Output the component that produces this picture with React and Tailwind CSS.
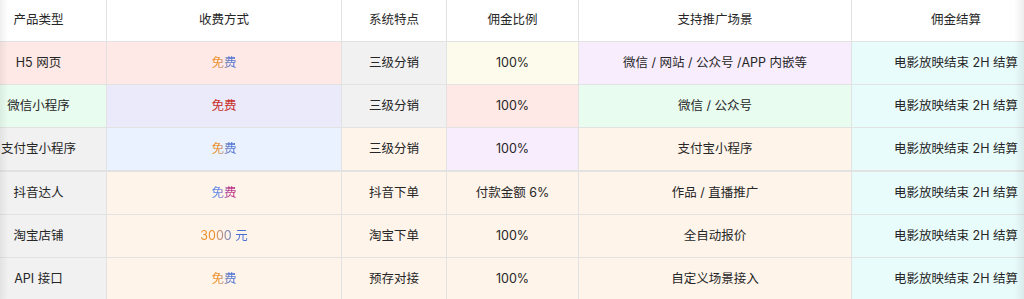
import { useLayoutEffect, useRef } from "react";

const bg = {
  pink: "bg-[#fee9e6]",
  green: "bg-[#e8fcef]",
  lavblue: "bg-[#eaeafb]",
  gray: "bg-[#f1f1f1]",
  cream: "bg-[#fdfbeb]",
  lav: "bg-[#f8edfd]",
  blue: "bg-[#e9f2fe]",
  peach: "bg-[#fef4ea]",
  cyan: "bg-[#e9fcfc]",
};

const warm = "bg-linear-to-r from-[#ec8d25] from-30% to-[#4a6fd2] to-70% bg-clip-text text-transparent";
const red = "text-[#c8302a]";
const violet = "bg-linear-to-r from-[#5a84e4] from-30% to-[#b82a82] to-70% bg-clip-text text-transparent";

const headers = ["产品类型", "收费方式", "系统特点", "佣金比例", "支持推广场景", "佣金结算"];

const rows = [
  {
    cells: [
      ["H5 网页", "pink"],
      ["免费", "pink", warm],
      ["三级分销", "gray"],
      ["100%", "cream"],
      ["微信 / 网站 / 公众号 /APP 内嵌等", "lav"],
      ["电影放映结束 2H 结算", "cyan"],
    ],
  },
  {
    cells: [
      ["微信小程序", "green"],
      ["免费", "lavblue", red],
      ["三级分销", "gray"],
      ["100%", "pink"],
      ["微信 / 公众号", "green"],
      ["电影放映结束 2H 结算", "cyan"],
    ],
  },
  {
    thick: true,
    cells: [
      ["支付宝小程序", "gray"],
      ["免费", "blue", warm],
      ["三级分销", "peach"],
      ["100%", "lav"],
      ["支付宝小程序", "peach"],
      ["电影放映结束 2H 结算", "cyan"],
    ],
  },
  {
    cells: [
      ["抖音达人", "gray"],
      ["免费", "peach", violet],
      ["抖音下单", "peach"],
      ["付款金额 6%", "peach"],
      ["作品 / 直播推广", "peach"],
      ["电影放映结束 2H 结算", "cyan"],
    ],
  },
  {
    cells: [
      ["淘宝店铺", "gray"],
      ["3000 元", "peach", warm],
      ["淘宝下单", "peach"],
      ["100%", "peach"],
      ["全自动报价", "peach"],
      ["电影放映结束 2H 结算", "cyan"],
    ],
  },
  {
    cells: [
      ["API 接口", "gray"],
      ["免费", "peach", warm],
      ["预存对接", "peach"],
      ["100%", "peach"],
      ["自定义场景接入", "peach"],
      ["电影放映结束 2H 结算", "cyan"],
    ],
  },
];

const cols = "grid grid-cols-[136px_235px_105px_132px_273px_208px]";

export default function App() {
  const scroller = useRef(null);

  useLayoutEffect(() => {
    if (scroller.current) scroller.current.scrollLeft = 29;
  }, []);

  return (
    <div
      className="relative w-[1024px] h-[299px] overflow-hidden bg-white text-[12.5px] text-[#262626]"
      style={{ fontFamily: 'Inter, "Noto Sans CJK SC", sans-serif' }}
    >
      <div ref={scroller} className="h-full overflow-x-auto overflow-y-hidden [scrollbar-width:none]">
        <div className="w-[1089px]">
          <div className={`${cols} h-[42px] border-b border-[#e2e2e2] bg-white`}>
            {headers.map((h, i) => (
              <div
                key={h}
                className={`flex items-center justify-center ${i < 5 ? "border-r border-[#e2e2e2]" : ""}`}
              >
                {h}
              </div>
            ))}
          </div>
          {rows.map((row, r) => (
            <div
              key={r}
              className={`${cols} ${row.thick ? "h-[44px] border-b-2" : "h-[43px] border-b"} border-[#e2e2e2]`}
            >
              {row.cells.map(([text, color, tone], i) => (
                <div
                  key={i}
                  className={`flex items-center justify-center whitespace-nowrap ${bg[color]} ${i < 5 ? "border-r border-[#e2e2e2]" : ""}`}
                >
                  <span className={tone || ""}>{text}</span>
                </div>
              ))}
            </div>
          ))}
        </div>
      </div>
      <div className="pointer-events-none absolute inset-y-0 left-0 w-[8px] bg-linear-to-r from-black/[0.06] to-transparent" />
      <div className="pointer-events-none absolute inset-y-0 right-0 w-[10px] bg-linear-to-l from-black/[0.07] to-transparent" />
    </div>
  );
}
